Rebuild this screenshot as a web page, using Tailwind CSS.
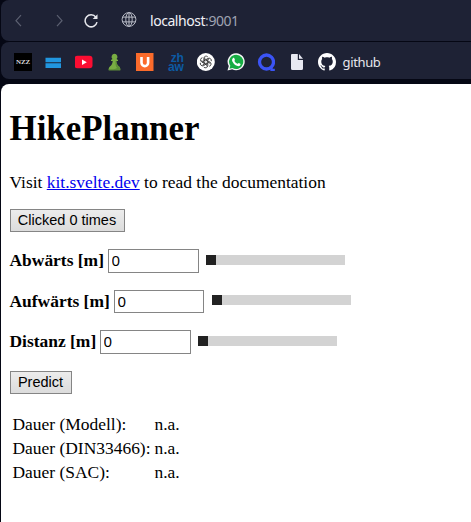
<!DOCTYPE html>
<html lang="de">
<head>
<meta charset="utf-8">
<title>HikePlanner</title>
<script src="https://cdn.jsdelivr.net/npm/@tailwindcss/browser@4"></script>
</head>
<body class="h-[522px] w-[471px] overflow-hidden bg-[#050714]">
<div class="flex h-full flex-col pl-px">
  <nav class="flex h-[41px] shrink-0 items-center rounded-l-lg bg-[#1e2235] pb-[2px] pl-[11px]">
    <svg class="h-4 w-4" viewBox="0 0 16 16" fill="none" stroke="#5c6071" stroke-width="1.2"><path d="M9 3.200 4 8.700l5 5.500"/></svg>
    <svg class="ml-[25px] h-4 w-4" viewBox="0 0 16 16" fill="none" stroke="#5c6071" stroke-width="1.2"><path d="m4 3.200 5 5.500-5 5.500"/></svg>
    <svg class="ml-[14px] h-4 w-4" viewBox="0 0 16 16" fill="none" stroke="#e7e8ed" stroke-width="1.5"><path d="M14 10.100A6 6 0 1 1 12.900 5.200"/><path d="M14.500 2.200v4.800H9.700Z" fill="#e7e8ed" stroke="none"/></svg>
    <svg class="ml-[22px] h-4 w-4" viewBox="0 0 16 16" fill="none" stroke="#b9bcc7" stroke-width="1"><circle cx="8" cy="7.500" r="6.900"/><ellipse cx="8" cy="7.500" rx="3.200" ry="6.900"/><path d="M8 .6v13.800M1.700 5.100h12.600M1.700 9.900h12.600"/></svg>
    <span class="ml-[13px] mt-[2px] font-['Noto_Sans',sans-serif] text-[14px] leading-5 tracking-[-0.450px] text-[#f0f1f5]">localhost<span class="text-[#9fa3b2]">:9001</span></span>
  </nav>
  <div class="mt-px flex h-[37px] shrink-0 items-center gap-[12.5px] rounded-l-lg bg-[#1e2235] pl-[13px] pt-[3px]">
    <span class="flex h-[18px] w-[18px] items-center justify-center bg-black font-['Liberation_Serif',serif] text-[7px] font-bold tracking-[-0.2px] text-[#ddd]">NZZ</span>
    <svg class="h-[18px] w-[18px]" viewBox="0 0 18 18"><path fill="#2196df" d="M.5 4.700h15.500v4.600H.5zM.5 10.300h15.500v4.700H.5z"/></svg>
    <svg class="h-[18px] w-[18px]" viewBox="0 0 18 18"><rect x="-.5" y="2.800" width="18" height="12.500" rx="3" fill="#fb0d32"/><path fill="#fff" d="m7 6.500 4.800 2.700L7 11.900z"/></svg>
    <svg class="h-[18px] w-[18px]" viewBox="0 0 18 18"><path fill="#79ad43" d="M8.500.8a3 3 0 0 1 2.100 5.100l1.400 1.200v.8h-1.700c.2 2.500 1 4 2.800 5.700 1 .9 1.300 2.100 1.200 3.600H2.700c-.1-1.500.2-2.700 1.200-3.600C5.700 11.900 6.500 10.400 6.700 7.900H5v-.8l1.400-1.200A3 3 0 0 1 8.500.8Z"/><path fill="#5c8f36" d="M9.500 7.900h.8c.2 2.500 1 4 2.800 5.700 1 .9 1.300 2.100 1.200 3.600H2.700l.1-1.300c3.500.5 6.700.2 8.200-1-1.500-2-1.600-4.300-1.500-7Z"/></svg>
    <svg class="h-[18px] w-[18px]" viewBox="0 0 18 18"><rect width="17.500" height="18" fill="#fb6b2b"/><path fill="none" stroke="#fff" stroke-width="2.600" d="M5.500 4v5.800a3.300 3.300 0 0 0 6.600 0V4"/></svg>
    <span class="h-[18px] w-[18px] pr-px pt-px text-right font-['Liberation_Sans',sans-serif] text-[12px] font-bold leading-[9px] tracking-[-0.300px] text-[#0c5aa3]">zh<br>aw</span>
    <svg class="h-[18px] w-[18px]" viewBox="0 0 18 18"><circle cx="8.800" cy="9" r="9" fill="#fff"/><g transform="translate(-.2 0)"><g fill="none" stroke="#333" stroke-width=".85" stroke-linejoin="round"><path id="petal" d="M7 10.200V5.400a2.300 2.300 0 0 1 4-1.500M9 7.800l3.300-1.900"/><use href="#petal" transform="rotate(60 9 9)"/><use href="#petal" transform="rotate(120 9 9)"/><use href="#petal" transform="rotate(180 9 9)"/><use href="#petal" transform="rotate(240 9 9)"/><use href="#petal" transform="rotate(300 9 9)"/></g></g></svg>
    <svg class="-ml-px h-[18px] w-[18px]" viewBox="0 0 18 18"><path fill="#f5f7f6" d="M9.200.3a8.500 8.500 0 1 1-4 16L.5 17.600l1.300-4.500A8.500 8.500 0 0 1 9.200.3Z"/><path fill="#16ad43" d="M9.200 1.700a7.100 7.100 0 1 1-3.700 13.200l-3 .8.800-2.900A7.100 7.100 0 0 1 9.200 1.700Z"/><path fill="#fff" d="M6.100 5.100c.5-.5 1-.3 1.200.1l.6 1.500c.2.600-.7 1-.5 1.400.7 1.300 1.700 2.200 3 2.700.5.200.9-1 1.400-.8l1.500.8c.5.300.1 1.400-.5 1.900-1.100.8-2.700.4-4.200-.4A9 9 0 0 1 5.400 8.600c-.6-1.200-.4-2.600.7-3.500Z"/></svg>
    <svg class="h-[18px] w-[18px]" viewBox="0 0 18 18" fill="none" stroke="#3b54f5" stroke-width="3.300"><circle cx="9.500" cy="9" r="7"/><path d="M14.500 13.500v3.300h3.300" stroke-width="2.300"/></svg>
    <svg class="h-[18px] w-[18px]" viewBox="0 0 18 18"><path fill="#e8e9f2" d="M4 1h5.800v6H15v8.500q0 1.500-1.500 1.500h-9Q3 17 3 15.500V2q0-1 1-1Z"/><path fill="#e8e9f2" d="m11 1 4 4.800h-4z"/></svg>
    <svg class="h-[18px] w-[18px]" viewBox="0 0 16 16" fill="#fff"><path d="M8 0C3.580 0 0 3.580 0 8c0 3.540 2.290 6.530 5.470 7.590.4.070.55-.17.55-.38 0-.19-.01-.82-.01-1.490-2.010.37-2.530-.49-2.690-.94-.09-.23-.48-.94-.82-1.130-.28-.15-.68-.52-.01-.53.630-.01 1.080.58 1.230.82.720 1.210 1.870.87 2.330.66.070-.52.280-.87.510-1.070-1.780-.2-3.640-.89-3.640-3.950 0-.87.310-1.590.82-2.150-.08-.2-.36-1.020.08-2.120 0 0 .67-.21 2.200.82.640-.18 1.320-.27 2-.27s1.360.09 2 .27c1.530-1.040 2.200-.82 2.200-.82.440 1.100.16 1.920.08 2.120.510.560.82 1.270.82 2.150 0 3.070-1.870 3.750-3.650 3.950.290.250.54.730.54 1.480 0 1.070-.01 1.930-.01 2.200 0 .210.150.46.55.38A8.010 8.010 0 0 0 16 8c0-4.420-3.580-8-8-8Z"/></svg>
    <span class="-ml-[6px] font-['Noto_Sans',sans-serif] text-[13px] leading-5 tracking-[-0.350px] text-[#e6e7ed]">github</span>
  </div>
  <main class="mt-[5px] flex grow flex-col items-start rounded-tl-lg bg-white pl-[8.500px] font-['Liberation_Serif',serif] text-[17.450px] leading-[20px] text-black">
    <h1 class="mt-[25px] text-[34.900px] font-bold leading-[40px]">HikePlanner</h1>
    <p class="mt-[23px]">Visit <a class="text-[#0000ee] underline" href="#">kit.svelte.dev</a> to read the documentation</p>
    <button class="mt-[17px] h-[23px] w-[115px] shrink-0 border border-[#858585] bg-linear-to-b from-[#ececec] to-[#dcdcdc] pb-px font-['Liberation_Sans',sans-serif] text-[14.500px] leading-[20px]">Clicked 0 times</button>
    <div class="mt-[17px] flex h-[24px] shrink-0 items-center"><b class="w-[98px] whitespace-nowrap pb-[2px]">Abwärts [m]</b><input class="h-[24px] w-[91px] border border-[#858585] pb-[2px] pl-[3px] font-['Noto_Sans',sans-serif] text-[15px]" value="0"><div class="mb-[2px] ml-[7px] h-[10px] w-[139px] bg-[#d3d3d3]"><div class="h-[10px] w-[10px] bg-[#222]"></div></div></div>
    <div class="mt-[17px] flex h-[23px] shrink-0 items-center"><b class="w-[104px] whitespace-nowrap pb-[2px]">Aufwärts [m]</b><input class="h-[23px] w-[90px] border border-[#858585] pb-[2px] pl-[3px] font-['Noto_Sans',sans-serif] text-[15px]" value="0"><div class="mb-[3px] ml-[8px] h-[10px] w-[139px] bg-[#d3d3d3]"><div class="h-[10px] w-[10px] bg-[#222]"></div></div></div>
    <div class="mt-[17px] flex h-[24px] shrink-0 items-center"><b class="w-[90px] whitespace-nowrap pb-[2px]">Distanz [m]</b><input class="h-[24px] w-[91px] border border-[#858585] pb-[2px] pl-[3px] font-['Noto_Sans',sans-serif] text-[15px]" value="0"><div class="mb-[2px] ml-[7px] h-[10px] w-[139px] bg-[#d3d3d3]"><div class="h-[10px] w-[10px] bg-[#222]"></div></div></div>
    <button class="mt-[17px] h-[23px] w-[62px] shrink-0 border border-[#858585] bg-linear-to-b from-[#ececec] to-[#dcdcdc] pb-px font-['Liberation_Sans',sans-serif] text-[14.500px] leading-[20px]">Predict</button>
    <div class="ml-[3px] mt-[18px] grid grid-cols-[142px_auto] whitespace-nowrap leading-[24px]">
      <span>Dauer (Modell):</span><span>n.a.</span>
      <span>Dauer (DIN33466):</span><span>n.a.</span>
      <span>Dauer (SAC):</span><span>n.a.</span>
    </div>
  </main>
</div>
</body>
</html>
